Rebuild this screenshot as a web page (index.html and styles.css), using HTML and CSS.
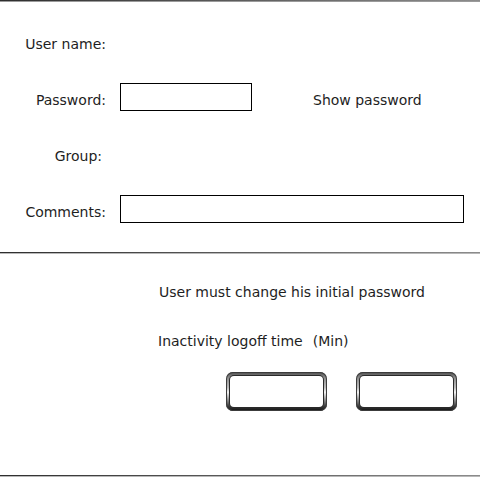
FILE: index.html
```html
<!DOCTYPE html>
<html>
<head>
<meta charset="utf-8">
<link rel="stylesheet" href="styles.css">
</head>
<body>
<div class="page">
  <div class="sep sep-top"></div>
  <div class="form">
    <div class="row">
      <span class="label">User name:</span>
    </div>
    <div class="row">
      <span class="label">Password:</span>
      <span class="box box-short"></span>
      <span class="aside">Show password</span>
    </div>
    <div class="row">
      <span class="label label-group">Group:</span>
    </div>
    <div class="row">
      <span class="label">Comments:</span>
      <span class="box box-long"></span>
    </div>
  </div>
  <div class="sep"></div>
  <div class="options">
    <div class="opt opt-first">User must change his initial password</div>
    <div class="opt opt-second">Inactivity logoff time<span class="unit">(Min)</span></div>
    <div class="buttons">
      <div class="btn"><div class="btn-inner"></div></div>
      <div class="btn"><div class="btn-inner"></div></div>
    </div>
  </div>
  <div class="sep"></div>
</div>
</body>
</html>
```
FILE: styles.css
```css
html, body {
  margin: 0;
  padding: 0;
  background: #fff;
}
.page {
  width: 480px;
  height: 480px;
  font-family: "DejaVu Sans", sans-serif;
  font-size: 14px;
  color: #1e1e1e;
  overflow: hidden;
}
.sep {
  height: 1px;
  background: linear-gradient(to right, #2e2e2e, #8c8c8c);
  border-bottom: 1px solid #b8b8b8;
}
.sep-top {
  border-bottom-color: #9a9a9a;
}
.form {
  display: flex;
  flex-direction: column;
  gap: 28px;
  padding-top: 25px;
  height: 250px;
  box-sizing: border-box;
}
.row {
  display: flex;
  align-items: flex-start;
  height: 28px;
}
.label {
  width: 106px;
  text-align: right;
  line-height: 28px;
  padding-top: 3px;
  box-sizing: border-box;
  margin-right: 14px;
  flex: none;
}
.label-group {
  padding-right: 4px;
}
.box {
  display: block;
  height: 28px;
  border: 1px solid #000;
  box-sizing: border-box;
  background: #fff;
}
.box-short {
  width: 132px;
}
.box-long {
  width: 344px;
}
.aside {
  margin-left: 61px;
  line-height: 28px;
  padding-top: 3px;
}
.options {
  padding-top: 28px;
  height: 221px;
  box-sizing: border-box;
}
.opt {
  line-height: 20px;
}
.opt-first {
  padding-left: 159px;
}
.opt-second {
  padding-left: 158px;
  margin-top: 29px;
}
.unit {
  margin-left: 10px;
}
.buttons {
  display: flex;
  gap: 29px;
  padding-left: 226px;
  margin-top: 21px;
}
.btn {
  width: 101px;
  height: 39px;
  box-sizing: border-box;
  border-radius: 7px;
  padding: 4px;
  background: linear-gradient(180deg, #4a4a4a 0%, #8a8a8a 14%, #bdbdbd 40%, #f4f4f4 52%, #a0a0a0 68%, #3a3a3a 88%, #111 100%);
  box-shadow: inset 0 0 0 1px #3c3c3c;
}
.btn-inner {
  height: 100%;
  background: #fff;
  border-radius: 4px;
  box-shadow: 0 0 0 1px #2a2a2a;
}
```
